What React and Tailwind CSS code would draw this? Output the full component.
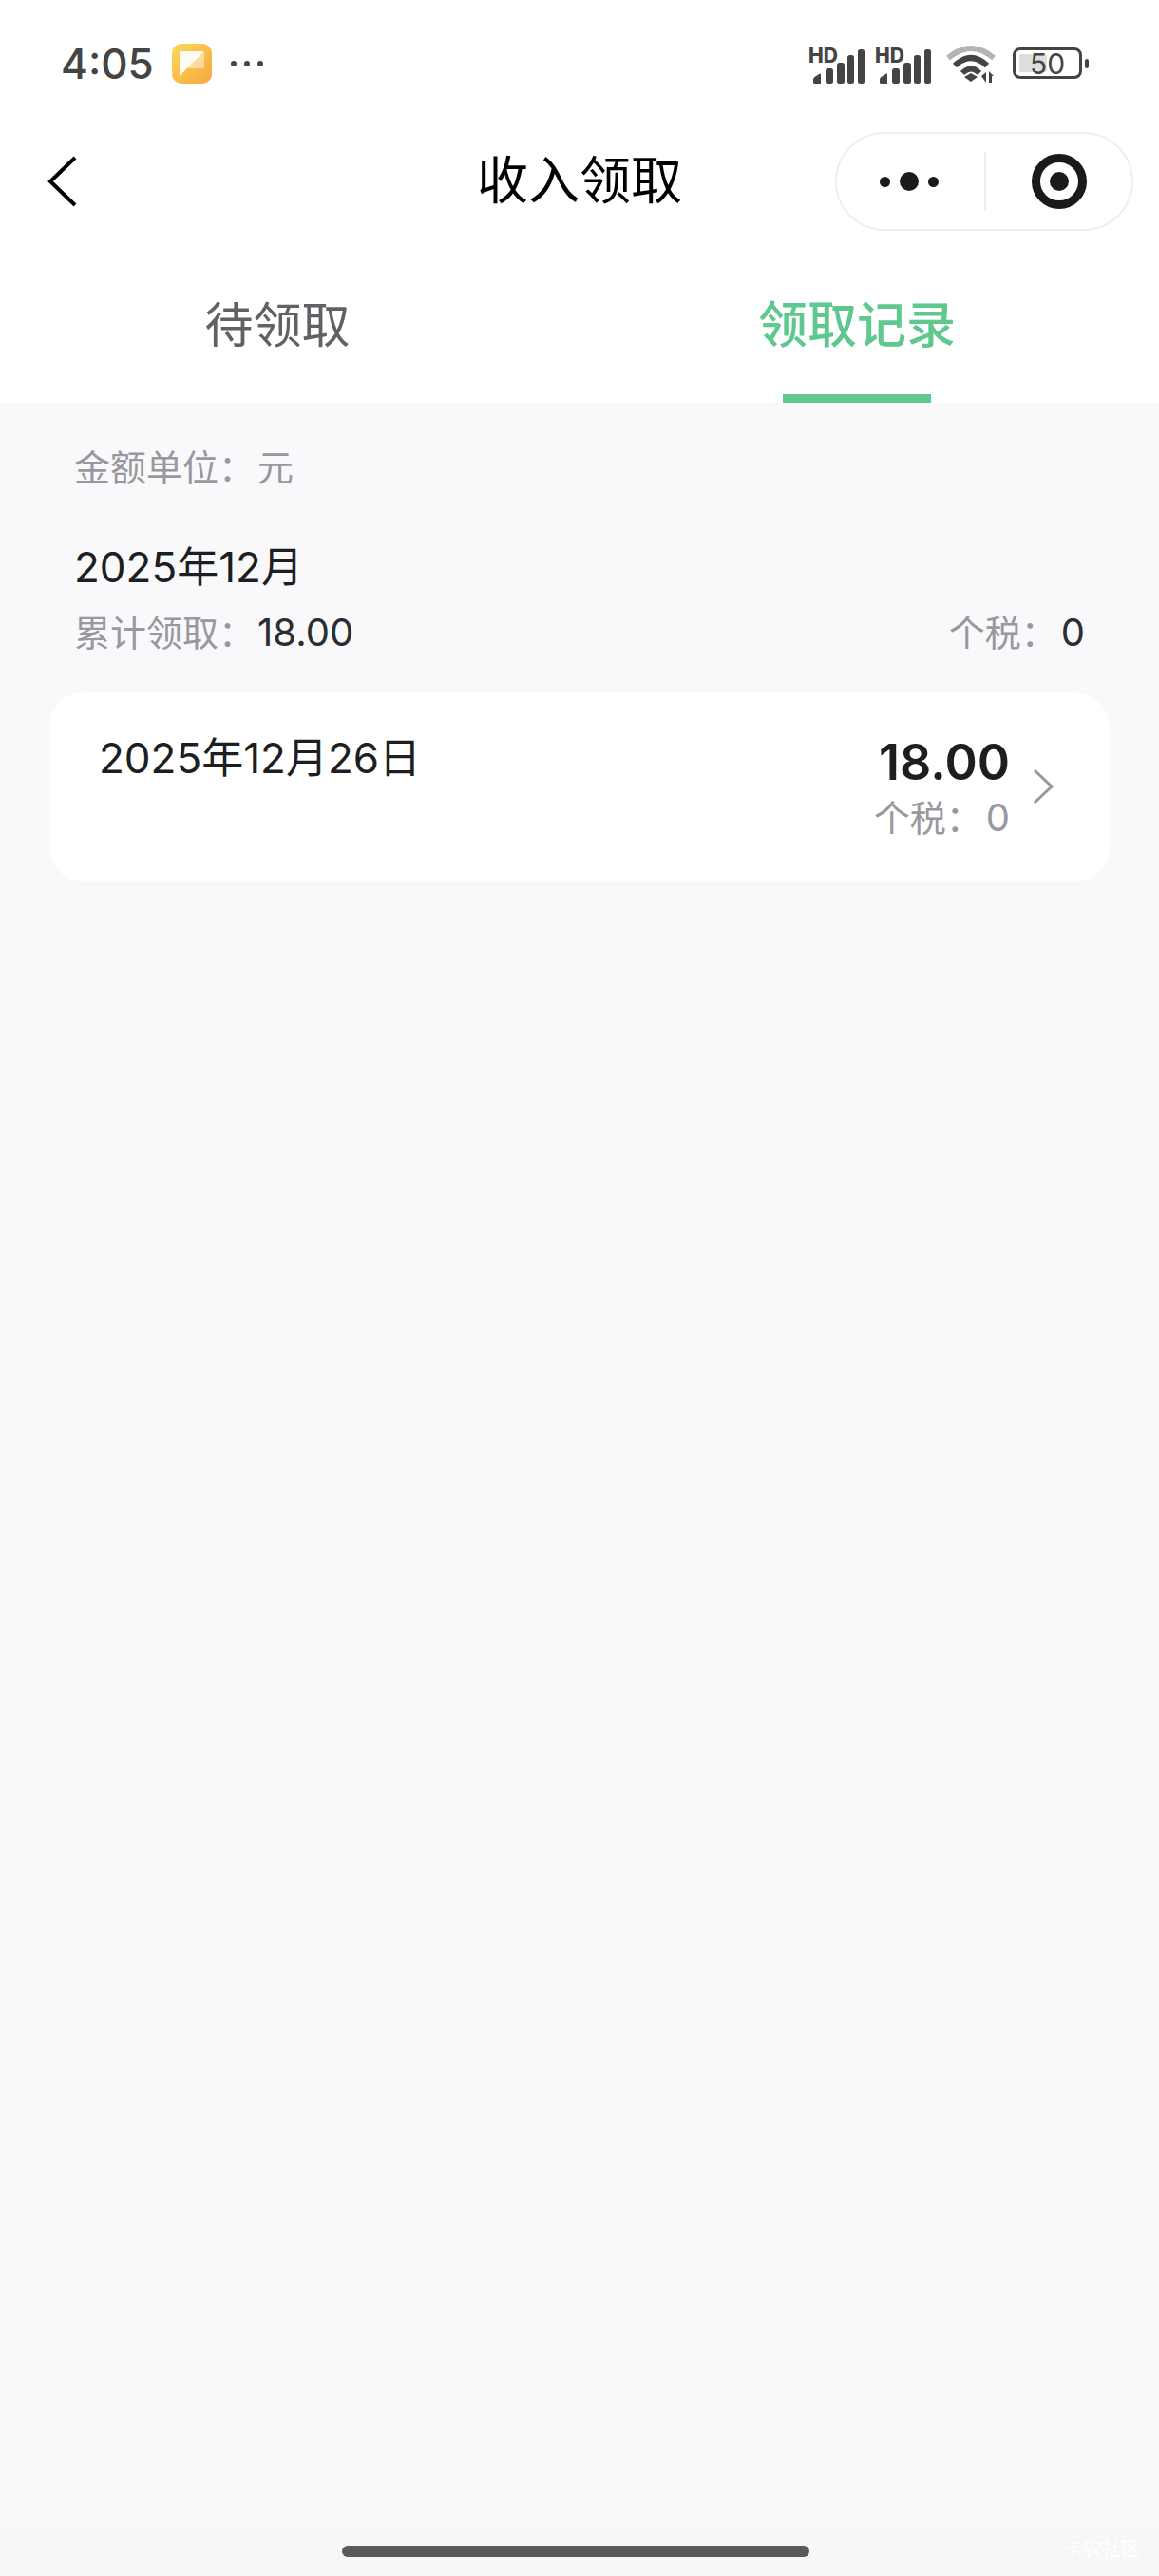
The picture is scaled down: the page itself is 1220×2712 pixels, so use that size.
const SANS = 'font-["Inter","Noto_Sans_CJK_SC",sans-serif]'
const COLON = '\uFF1A'

const Signal = () => (
  <svg width="58" height="44" viewBox="0 -6 58 44" className="block overflow-visible">
    <text x="-2" y="15" fontFamily="Inter, sans-serif" fontWeight="800" fontSize="21" fill="#444">HD</text>
    <path d="M3 32.5 Q3 31 4.5 30 L10 26.5 Q11 26 11 27.5 L11 37 H4.5 Q3 37 3 35.5 Z" fill="#444" />
    <rect x="16" y="21" width="8" height="16" rx="2.5" fill="#444" />
    <rect x="28" y="15" width="8" height="22" rx="2.5" fill="#444" />
    <rect x="39" y="7" width="7" height="30" rx="2.5" fill="#444" />
    <rect x="50" y="1" width="7" height="36" rx="2.5" fill="#444" />
  </svg>
)

const Wifi = () => (
  <svg width="56" height="40" viewBox="0 0 56 40" className="block">
    <path d="M3 14 Q27 -6 51 14" fill="none" stroke="#b4b4b4" strokeWidth="6" />
    <path d="M10 22 Q27 6 44 22" fill="none" stroke="#444" strokeWidth="6" />
    <path d="M18 30 Q27 21 36 30" fill="none" stroke="#444" strokeWidth="6" />
    <path d="M20 34 L27 30 L34 34 L27 39 Z" fill="#444" />
    <path d="M38 33 L43 29 V40 Z M46 28 L51 33 H49 V40 H46 Z" fill="#444" />
  </svg>
)

const Battery = () => (
  <div className="flex items-center gap-[3px]">
    <div className="relative w-[73px] h-[33px] border-[3px] border-[#444] rounded-[8px] flex items-center justify-center">
      <div className="absolute left-[4px] top-[4px] bottom-[4px] w-[29px] bg-[#dedede] rounded-[2px]" />
      <span className={`relative ${SANS} text-[30px] leading-none text-[#444]`}>50</span>
    </div>
    <div className="w-[4px] h-[10px] bg-[#444] rounded-[2px]" />
  </div>
)

const AppIcon = () => (
  <div className="w-[42px] h-[42px] rounded-[10px] bg-gradient-to-br from-[#fbd75a] to-[#f6a73c] flex items-center justify-center">
    <svg width="26" height="26" viewBox="0 0 26 26">
      <path d="M0 1 Q0 0 1 0 H26 L0 26 Z" fill="#fff" opacity="0.95" />
      <path d="M26 0 V17 Q26 18 25 18 H8 Z" fill="#fff" opacity="0.45" />
    </svg>
  </div>
)

const Capsule = () => (
  <div className="w-[314px] h-[104px] rounded-full border-2 border-[#eeeeee] flex items-center">
    <div className="w-[155px] flex items-center justify-center gap-[10px] pr-[4px]">
      <span className="w-[11px] h-[11px] rounded-full bg-[#1a1a1a]" />
      <span className="w-[20px] h-[20px] rounded-full bg-[#1a1a1a]" />
      <span className="w-[11px] h-[11px] rounded-full bg-[#1a1a1a]" />
    </div>
    <div className="w-[2px] h-[62px] bg-[#eeeeee]" />
    <div className="flex-1 flex items-center justify-center">
      <div className="w-[58px] h-[58px] rounded-full border-[9px] border-[#1a1a1a] flex items-center justify-center">
        <span className="w-[20px] h-[20px] rounded-full bg-[#1a1a1a]" />
      </div>
    </div>
  </div>
)

export default function App() {
  return (
    <div className={`relative w-[1220px] h-[2712px] flex flex-col bg-[#f9f9fb] ${SANS}`}>
      <div className="bg-white">
        {/* status bar */}
        <div className="h-[133px] flex items-center justify-between pl-[64px] pr-[74px]">
          <div className="flex items-center">
            <span className="w-[95px] text-[44px] leading-none font-medium text-[#444]">4:05</span>
            <div className="ml-[22px]"><AppIcon /></div>
            <div className="flex gap-[8px] ml-[20px]">
              <span className="w-[6px] h-[6px] rounded-full bg-[#444]" />
              <span className="w-[6px] h-[6px] rounded-full bg-[#444]" />
              <span className="w-[6px] h-[6px] rounded-full bg-[#444]" />
            </div>
          </div>
          <div className="flex items-center">
            <Signal />
            <div className="ml-[12px]"><Signal /></div>
            <div className="ml-[14px]"><Wifi /></div>
            <div className="ml-[15px]"><Battery /></div>
          </div>
        </div>

        {/* nav */}
        <div className="relative h-[116px] flex items-center justify-between pl-[50px] pr-[27px]">
          <svg width="32" height="54" viewBox="0 0 32 54" className="block">
            <path d="M29 2 L3 27 L29 52" fill="none" stroke="#000" strokeWidth="4" />
          </svg>
          <div className="absolute left-0 right-0 text-center text-[54px] leading-none text-black pointer-events-none">收入领取</div>
          <Capsule />
        </div>

        {/* tabs */}
        <div className="h-[175px] grid grid-cols-[584px_636px]">
          <div className="flex flex-col items-center pt-[68px]">
            <span className="text-[51px] leading-[52px] text-[#5f6165]">待领取</span>
          </div>
          <div className="flex flex-col items-center pt-[68px]">
            <span className="text-[52px] leading-[52px] font-medium text-[#5fc88f]">领取记录</span>
            <div className="mt-auto w-[156px] h-[9px] bg-[#5fc88f]" />
          </div>
        </div>
      </div>

      <div className="flex-1 flex flex-col px-[52px] pt-[46px]">
        <div className="px-[26px] text-[38px] leading-[44px] text-[#97999e]">金额单位{COLON}<span className="ml-[3px]">元</span></div>
        <div className="px-[26px] mt-[58px] text-[44px] leading-[50px] text-[#1c1e21]">2025年12月</div>
        <div className="px-[26px] mt-[21px] flex justify-between text-[38px] leading-[46px] text-[#97999e]">
          <span>累计领取{COLON}<span className="ml-[3px] text-[40px] text-[#2b2d30]">18.00</span></span>
          <span>个税{COLON}<span className="ml-[4px] text-[40px] text-[#2b2d30]">0</span></span>
        </div>
        <div className="mt-[40px] h-[199px] rounded-[36px] bg-white flex justify-between pl-[52px] pr-[59px] pt-[44px]">
          <span className="text-[44px] leading-[50px] text-[#1c1e21]">2025年12月26日</span>
          <div className="flex items-center gap-[24px] self-start">
            <div className="flex flex-col items-end">
              <span className="text-[52px] leading-[60px] font-semibold text-[#1c1e21]">18.00</span>
              <span className="mt-[6px] text-[38px] leading-[44px] text-[#97999e]">个税{COLON}<span className="ml-[4px] text-[40px]">0</span></span>
            </div>
            <svg width="22" height="38" viewBox="0 0 22 38" className="block">
              <path d="M2 2 L20 19 L2 36" fill="none" stroke="#97999e" strokeWidth="3" />
            </svg>
          </div>
        </div>
      </div>

      {/* home indicator */}
      <div className="relative h-[52px] bg-[#f7f7f7] flex items-center justify-center">
        <div className="w-[492px] h-[12px] rounded-full bg-[#5a5a5a] -ml-[8px]" />
        <span className="absolute right-[20px] top-[14px] text-[20px] leading-none text-white">卡农社区</span>
      </div>
    </div>
  )
}
